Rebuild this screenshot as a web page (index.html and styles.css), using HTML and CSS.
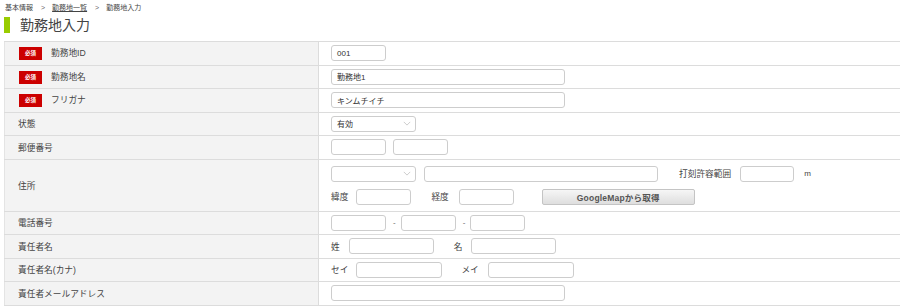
FILE: index.html
```html
<!DOCTYPE html>
<html lang="ja">
<head>
<meta charset="utf-8">
<link rel="stylesheet" href="styles.css">
</head>
<body>
<div class="breadcrumb">
  <span>基本情報</span><span class="sep">&gt;</span><a class="crumb-link">勤務地一覧</a><span class="sep">&gt;</span><span>勤務地入力</span>
</div>
<h1 class="title"><span class="bar"></span>勤務地入力</h1>
<table class="form">
  <tr>
    <th><span class="req">必須</span>勤務地ID</th>
    <td><span class="inp w55">001</span></td>
  </tr>
  <tr>
    <th><span class="req">必須</span>勤務地名</th>
    <td><span class="inp w233">勤務地1</span></td>
  </tr>
  <tr>
    <th><span class="req">必須</span>フリガナ</th>
    <td><span class="inp w233">キンムチイチ</span></td>
  </tr>
  <tr>
    <th>状態</th>
    <td><span class="sel w85"><span>有効</span><svg class="chev" viewBox="0 0 10 6"><path d="M1 1 L5 5 L9 1" fill="none" stroke="#bbb" stroke-width="0.9"/></svg></span></td>
  </tr>
  <tr>
    <th>郵便番号</th>
    <td><span class="line"><span class="inp w55"></span><span class="inp w55 ml7"></span></span></td>
  </tr>
  <tr class="tall">
    <th>住所</th>
    <td>
      <div class="line">
        <span class="sel w85"><span></span><svg class="chev" viewBox="0 0 10 6"><path d="M1 1 L5 5 L9 1" fill="none" stroke="#bbb" stroke-width="0.9"/></svg></span>
        <span class="inp w233 ml8"></span>
        <span class="txt ml21">打刻許容範囲</span>
        <span class="inp w54 ml9"></span>
        <span class="txt ml10 unit">m</span>
      </div>
      <div class="line mt7">
        <span class="txt">緯度</span>
        <span class="inp w55 ml8"></span>
        <span class="txt ml20">経度</span>
        <span class="inp w55 ml10"></span>
        <span class="btn ml28">GoogleMapから取得</span>
      </div>
    </td>
  </tr>
  <tr>
    <th>電話番号</th>
    <td><span class="line"><span class="inp w55"></span><span class="dash">-</span><span class="inp w55"></span><span class="dash">-</span><span class="inp w55"></span></span></td>
  </tr>
  <tr>
    <th>責任者名</th>
    <td><span class="line"><span class="txt">姓</span><span class="inp w85 ml9"></span><span class="txt ml20">名</span><span class="inp w85 ml9"></span></span></td>
  </tr>
  <tr>
    <th>責任者名(カナ)</th>
    <td><span class="line"><span class="txt">セイ</span><span class="inp w86 ml8"></span><span class="txt ml19">メイ</span><span class="inp w86 ml9"></span></span></td>
  </tr>
  <tr>
    <th>責任者メールアドレス</th>
    <td><span class="inp w233"></span></td>
  </tr>
</table>
</body>
</html>
```
FILE: styles.css
```css
html, body {
  margin: 0;
  padding: 0;
  background: #fff;
}
body {
  padding-left: 4px;
  font-family: "Liberation Sans", "Noto Sans CJK JP", sans-serif;
  color: #444;
  width: 900px;
  overflow: hidden;
}
.breadcrumb {
  height: 15px;
  padding-left: 1px;
  font-size: 7px;
  line-height: 15px;
  color: #444;
  display: flex;
  align-items: center;
}
.sep {
  margin: 0 7px 0 8px;
  color: #666;
}
.crumb-link {
  text-decoration: underline;
  color: #444;
}
.title {
  margin: 2px 0 0 0;
  height: 24px;
  display: flex;
  font-size: 14px;
  font-weight: normal;
  color: #444;
  align-items: flex-start;
  line-height: 16px;
}
.bar {
  display: inline-block;
  width: 6px;
  height: 16px;
  background: #99cc00;
  margin-right: 10px;
}
.form {
  border-collapse: collapse;
  width: 897px;
  font-size: 8.7px;
}
.form tr {
  height: 23.5px;
}
.form tr.tall {
  height: 52px;
}
.form th, .form td {
  border-top: 1px solid #dcdcdc;
  border-bottom: 1px solid #dcdcdc;
  padding: 0;
  vertical-align: middle;
}
.form th {
  width: 300px;
  background: #f3f3f3;
  text-align: left;
  font-weight: normal;
  padding-left: 13px;
  border-left: 1px solid #e4e4e4;
  border-right: 1px solid #dcdcdc;
  color: #444;
  white-space: nowrap;
}
.form td {
  padding-left: 12px;
  background: #fff;
}
.req {
  display: inline-block;
  width: 23px;
  height: 13px;
  line-height: 13px;
  background: #cc0000;
  color: #fff;
  font-size: 5.5px;
  text-align: center;
  margin-left: 1px;
  margin-right: 9px;
  vertical-align: middle;
  font-weight: bold;
}
.line {
  display: flex;
  align-items: center;
}
.inp, .sel {
  display: inline-flex;
  align-items: center;
  box-sizing: border-box;
  height: 16px;
  border: 1px solid #cdcdcd;
  border-radius: 3px;
  background: #fff;
  padding: 0 5px;
  font-size: 8px;
  color: #333;
  vertical-align: middle;
}
.sel {
  justify-content: space-between;
  padding-right: 4px;
}
.chev {
  width: 8px;
  height: 5px;
}
.txt {
  white-space: nowrap;
  color: #444;
}
.unit {
  font-size: 8px;
}
.dash {
  margin: 0 5px 0 7px;
  color: #666;
  font-size: 8px;
}
.btn {
  display: inline-flex;
  align-items: center;
  justify-content: center;
  box-sizing: border-box;
  width: 153px;
  height: 16px;
  border: 1px solid #c4c4c4;
  border-radius: 2px;
  background: linear-gradient(#f6f6f6, #dedede);
  font-size: 8.5px;
  font-weight: 600;
  color: #555;
  letter-spacing: 0.2px;
}
.w54 { width: 54px; }
.w55 { width: 55px; }
.w85 { width: 85px; }
.w86 { width: 86px; }
.w233 { width: 234px; }
.ml7 { margin-left: 7px; }
.ml8 { margin-left: 8px; }
.ml9 { margin-left: 9px; }
.ml10 { margin-left: 10px; }
.ml11 { margin-left: 11px; }
.ml19 { margin-left: 19px; }
.ml20 { margin-left: 20px; }
.ml21 { margin-left: 21px; }
.ml28 { margin-left: 28px; }
.mt7 { margin-top: 7px; }
```
